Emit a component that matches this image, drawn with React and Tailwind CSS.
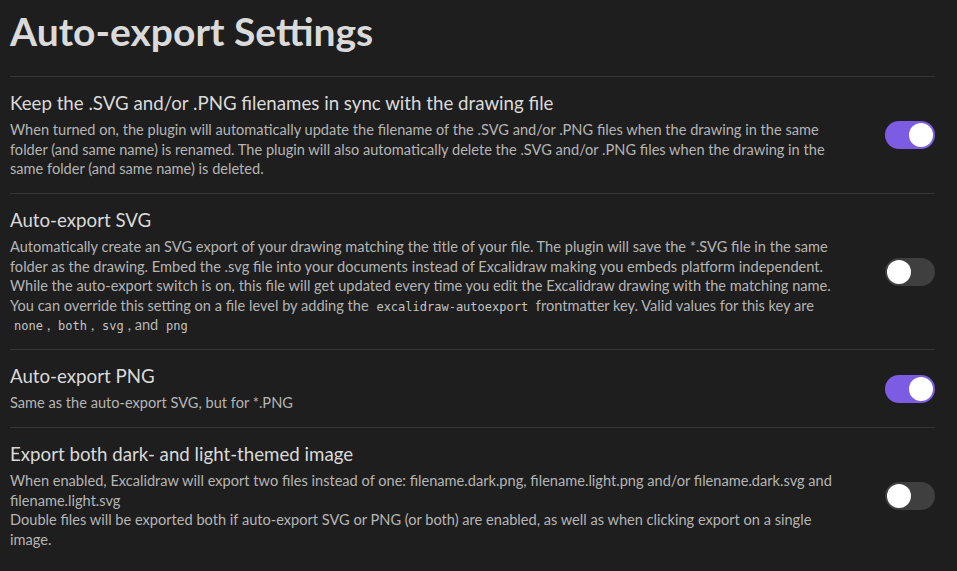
import React from "react";

function Toggle({ on }) {
  return (
    <div
      className={
        "relative h-[28px] w-[50px] shrink-0 rounded-full " +
        (on ? "bg-[#7b5ce2]" : "bg-[#3f3f3f]")
      }
    >
      <div
        className={
          "absolute top-[2px] h-[24px] w-[24px] rounded-full bg-white " +
          (on ? "left-[24px]" : "left-[2px]")
        }
      />
    </div>
  );
}

function Code({ children }) {
  return (
    <code className="px-[4px] font-['DejaVu_Sans_Mono',monospace] text-[12px] leading-none text-[#c4c4c4]">
      {children}
    </code>
  );
}

function Row({ title, lines, on }) {
  return (
    <div className="flex items-center gap-4 border-t border-[#363636] pt-[15px] pb-[14.5px]">
      <div className="min-w-0 flex-1">
        <div className="text-[18.7px] leading-[22px] text-[#dadada]">{title}</div>
        <div className="mt-[6px] text-[14.6px] leading-[19.5px] text-[#b5b5b5]">
          {lines.map((l, i) => (
            <div key={i} className="h-[19.5px] whitespace-nowrap">
              {l}
            </div>
          ))}
        </div>
      </div>
      <Toggle on={on} />
    </div>
  );
}

export default function App() {
  return (
    <div className="min-h-[571px] w-[957px] overflow-hidden bg-[#1e1e1e] pl-[10px] pr-[22px] font-['Lato','Open_Sans',sans-serif]">
      <h1 className="pt-[6px] pb-[20px] text-[39px] font-bold leading-[50px] text-[#dadada]">
        Auto-export Settings
      </h1>
      <Row
        on
        title="Keep the .SVG and/or .PNG filenames in sync with the drawing file"
        lines={[
          "When turned on, the plugin will automatically update the filename of the .SVG and/or .PNG files when the drawing in the same",
          "folder (and same name) is renamed. The plugin will also automatically delete the .SVG and/or .PNG files when the drawing in the",
          "same folder (and same name) is deleted.",
        ]}
      />
      <Row
        on={false}
        title="Auto-export SVG"
        lines={[
          "Automatically create an SVG export of your drawing matching the title of your file. The plugin will save the *.SVG file in the same",
          "folder as the drawing. Embed the .svg file into your documents instead of Excalidraw making you embeds platform independent.",
          "While the auto-export switch is on, this file will get updated every time you edit the Excalidraw drawing with the matching name.",
          <>
            You can override this setting on a file level by adding the <Code>excalidraw-autoexport</Code> frontmatter key. Valid values for this key are
          </>,
          <>
            <Code>none</Code>, <Code>both</Code>, <Code>svg</Code>, and <Code>png</Code>
          </>,
        ]}
      />
      <Row on title="Auto-export PNG" lines={["Same as the auto-export SVG, but for *.PNG"]} />
      <Row
        on={false}
        title="Export both dark- and light-themed image"
        lines={[
          "When enabled, Excalidraw will export two files instead of one: filename.dark.png, filename.light.png and/or filename.dark.svg and",
          "filename.light.svg",
          "Double files will be exported both if auto-export SVG or PNG (or both) are enabled, as well as when clicking export on a single",
          "image.",
        ]}
      />
    </div>
  );
}
